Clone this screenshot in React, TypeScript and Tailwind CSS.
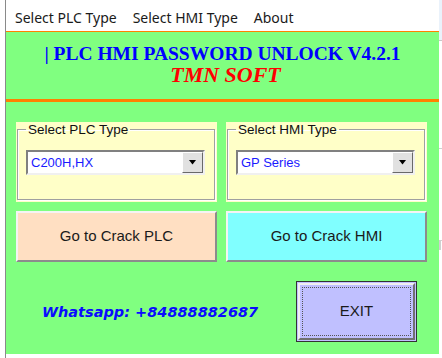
import React from 'react';

const ui = { fontFamily: '"Liberation Sans", Arial, sans-serif' };

const GroupBox: React.FC<{ label: string; value: string }> = ({ label, value }) => {
    return (
        <div className="w-[201px] h-[80px] bg-[#ffffc8] pl-[1px] pr-[2px]">
            <fieldset className="h-[78px] border border-[#a0a0a0] shadow-[inset_1px_1px_0_#ffffff,1px_1px_0_#ffffff] px-[8px] m-0 min-w-0">
                <legend className="px-[2px] text-[13.5px] leading-[15px] text-[#111]" style={ui}>{label}</legend>
                <div className="mt-[13px] w-[179px] h-[25px] bg-white border-2 border-t-[#808080] border-l-[#808080] border-b-[#f0f0f0] border-r-[#f0f0f0] flex items-center justify-between pl-[3px]">
                    <span className="text-[13px] text-[#1a1aff]" style={ui}>{value}</span>
                    <div className="w-[21px] h-[21px] bg-[#e1e1e1] border border-t-white border-l-white border-b-[#696969] border-r-[#696969] flex items-center justify-center">
                        <svg width="8" height="5" viewBox="0 0 8 5"><path d="M0 0h7L3.5 4.5z" fill="#000" /></svg>
                    </div>
                </div>
            </fieldset>
        </div>
    );
};

const App: React.FC = () => {
    return (
        <div className="w-[442px] h-[358px] bg-white flex overflow-hidden">
            <div className="w-[5px]" />
            <div className="w-[434px] border-l border-[#8a8a8a] flex flex-col">
                <div className="h-[31px] flex items-center gap-[16px] pl-[9px] pt-[4px] text-[14px] text-[#1a1a1a]" style={{ fontFamily: '"Noto Sans", "Open Sans", sans-serif' }}>
                    <span>Select PLC Type</span>
                    <span>Select HMI Type</span>
                    <span>About</span>
                </div>
                <div className="h-[1px] bg-[#ff8000]" />
                <div className="h-[322px] bg-[#80ff80] flex flex-col">
                    <div className="h-[67px] flex flex-col items-center pt-[12px]" style={{ fontFamily: '"Liberation Serif", "Times New Roman", serif' }}>
                        <div className="text-[19.5px] leading-[20px] font-bold text-[#0000ff]">| PLC HMI PASSWORD UNLOCK V4.2.1</div>
                        <div className="text-[22px] leading-[22px] font-bold italic text-[#ff0000] pl-[6px]">TMN SOFT</div>
                    </div>
                    <div className="h-[3px] bg-[#ff8000]" />
                    <div className="flex gap-[9px] pl-[10px] mt-[20px]">
                        <GroupBox label="Select PLC Type" value="C200H,HX" />
                        <GroupBox label="Select HMI Type" value="GP Series" />
                    </div>
                    <div className="flex gap-[9px] pl-[10px] mt-[9px]">
                        <button className="w-[201px] h-[51px] bg-[#ffdfc2] border-2 border-t-[#f4f4f4] border-l-[#f4f4f4] border-b-[#8c8c8c] border-r-[#8c8c8c] text-[15px] text-[#1a1a1a]" style={ui}>Go to Crack PLC</button>
                        <button className="w-[201px] h-[51px] bg-[#80ffff] border-2 border-t-[#f4f4f4] border-l-[#f4f4f4] border-b-[#8c8c8c] border-r-[#8c8c8c] text-[15px] text-[#1a1a1a]" style={ui}>Go to Crack HMI</button>
                    </div>
                    <div className="flex items-center mt-[19px]">
                        <div className="w-[290px] pl-[36px] pt-[3px] text-[14.5px] font-bold italic text-[#0a0aff]" style={{ fontFamily: '"DejaVu Sans", Verdana, sans-serif' }}>Whatsapp: +84888882687</div>
                        <button className="w-[121px] h-[61px] bg-[#c0c0ff] border border-[#333] p-[1px]">
                            <div className="w-full h-full border-2 border-t-[#f0f0f0] border-l-[#f0f0f0] border-b-[#707070] border-r-[#707070] p-[2px]">
                                <div className="w-full h-full border border-dotted border-[#555] flex items-center justify-center text-[15px] text-[#1a1a1a]" style={ui}>EXIT</div>
                            </div>
                        </button>
                    </div>
                </div>
            </div>
            <div className="w-[3px] flex flex-col">
                <div className="h-[40px] bg-[#eaf2fb]" />
                <div className="h-[108px] border-t border-[#c8c8c8]" />
                <div className="h-[92px] border-t border-[#d0d0d0]" />
                <div className="h-[10px] border-t border-[#d0d0d0] border-l-2 border-[#333]" />
            </div>
        </div>
    );
};

export default App;
